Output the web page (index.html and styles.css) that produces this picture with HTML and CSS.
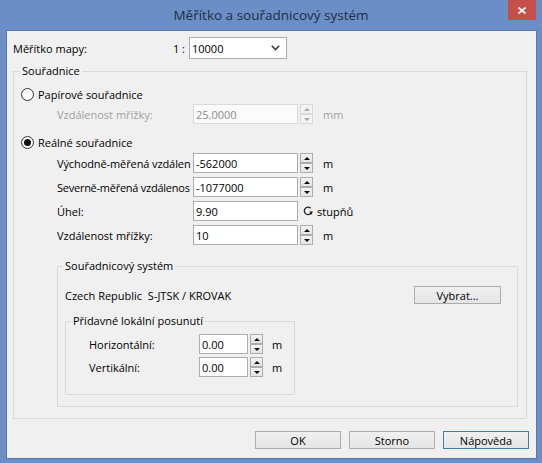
FILE: index.html
```html
<!DOCTYPE html>
<html lang="cs">
<head>
<meta charset="utf-8">
<title>Měřítko a souřadnicový systém</title>
<link rel="stylesheet" href="styles.css">
</head>
<body>
<div class="window">
  <div class="titlebar">
    <span class="title">Měřítko a souřadnicový systém</span>
    <span class="close"><svg width="8" height="7" viewBox="0 0 8 7"><path d="M0.5 0.5 L7.5 6.5 M7.5 0.5 L0.5 6.5" stroke="#fff" stroke-width="1.6" fill="none"/></svg></span>
  </div>
  <div class="client">
    <div class="scale-row">
      <span class="scale-label">Měřítko mapy:</span>
      <span class="scale-sep">1 :</span>
      <div class="combo"><span>10000</span><svg class="chev" width="9" height="6" viewBox="0 0 9 6"><path d="M0.8 0.8 L4.5 4.6 L8.2 0.8" stroke="#3a3a3a" stroke-width="1.5" fill="none"/></svg></div>
    </div>

    <fieldset class="group g1">
      <legend>Souřadnice</legend>
      <div class="radio-row first"><span class="radio"></span><span>Papírové souřadnice</span></div>
      <div class="field-row disabled">
        <span class="flabel">Vzdálenost mřížky:</span>
        <span class="input">25.0000</span>
        <span class="spin"><span class="up"></span><span class="down"></span></span>
        <span class="unit">mm</span>
      </div>
      <div class="radio-row second"><span class="radio checked"></span><span>Reálné souřadnice</span></div>
      <div class="field-row r-east">
        <span class="flabel tight">Východně-měřená vzdálen</span>
        <span class="input">-562000</span>
        <span class="spin"><span class="up"></span><span class="down"></span></span>
        <span class="unit">m</span>
      </div>
      <div class="field-row gap">
        <span class="flabel tighter">Severně-měřená vzdálenos</span>
        <span class="input">-1077000</span>
        <span class="spin"><span class="up"></span><span class="down"></span></span>
        <span class="unit">m</span>
      </div>
      <div class="field-row gap">
        <span class="flabel">Úhel:</span>
        <span class="input">9.90</span>
        <svg class="rotate" width="10" height="10" viewBox="0 0 10 10"><path d="M7.6 2.2 A3.7 3.7 0 1 0 8.3 6.6" stroke="#222" stroke-width="1.3" fill="none"/><path d="M6.2 5.6 L9.8 5.4 L8.6 8.8 Z" fill="#222"/></svg>
        <span class="unit-deg">stupňů</span>
      </div>
      <div class="field-row gap">
        <span class="flabel">Vzdálenost mřížky:</span>
        <span class="input">10</span>
        <span class="spin"><span class="up"></span><span class="down"></span></span>
        <span class="unit">m</span>
      </div>

      <fieldset class="group g2">
        <legend>Souřadnicový systém</legend>
        <div class="cs-row">
          <span>Czech Republic&nbsp; S-JTSK / KROVAK</span>
          <span class="btn vybrat">Vybrat...</span>
        </div>
        <fieldset class="group g3">
          <legend>Přídavné lokální posunutí</legend>
          <div class="off-row first">
            <span class="olabel">Horizontální:</span>
            <span class="input small">0.00</span>
            <span class="spin"><span class="up"></span><span class="down"></span></span>
            <span class="unit">m</span>
          </div>
          <div class="off-row second">
            <span class="olabel">Vertikální:</span>
            <span class="input small">0.00</span>
            <span class="spin"><span class="up"></span><span class="down"></span></span>
            <span class="unit">m</span>
          </div>
        </fieldset>
      </fieldset>
    </fieldset>

    <div class="buttons">
      <span class="btn">OK</span>
      <span class="btn">Storno</span>
      <span class="btn default">Nápověda</span>
    </div>
  </div>
</div>
</body>
</html>
```

FILE: styles.css
```css
* { box-sizing: border-box; }
html, body { margin: 0; padding: 0; }
body {
  width: 542px;
  height: 463px;
  overflow: hidden;
  background: #6b8ec6;
  font-family: "Open Sans", "Noto Sans", sans-serif;
  font-size: 11px;
  color: #000;
}
.window {
  display: flex;
  flex-direction: column;
  height: 463px;
}
.titlebar {
  height: 31px;
  flex: none;
  position: relative;
  display: flex;
  align-items: center;
  justify-content: center;
}
.title {
  font-size: 13.5px;
  color: #1e2f45;
  line-height: 16px;
  margin-top: -1px;
}
.close {
  position: absolute;
  top: 0;
  right: 6px;
  width: 28px;
  height: 20px;
  background: #c74f4b;
  display: flex;
  align-items: center;
  justify-content: center;
}
.client {
  flex: 1;
  margin: 0 6px 5px 7px;
  background: #f0f0f0;
  box-shadow: 0 0 0 1px #5878ad;
  display: flex;
  flex-direction: column;
}
.scale-row {
  display: flex;
  align-items: center;
  height: 22px;
  margin-top: 6px;
  padding-left: 6px;
  white-space: nowrap;
}
.scale-label { width: 156px; }
.scale-sep { width: 20px; text-align: right; padding-right: 4px; }
.combo {
  width: 98px;
  height: 22px;
  border: 1px solid #abadb3;
  background: #fff;
  display: flex;
  align-items: center;
  justify-content: space-between;
  padding: 0 6px 0 2px;
}

.group {
  margin: 0;
  padding: 0;
  border: 1px solid #dadada;
  min-width: 0;
}
.group > legend {
  padding: 0 2px;
  line-height: 14px;
  height: 14px;
  margin-left: 6px;
}
.g1 { margin: 5px 0 0 6px; width: 514px; height: 355px; flex: none; }
.g2 { margin: 14px 0 0 43px; width: 461px; height: 148px; }
.g2 > legend { margin-left: 5px; }
.g3 { margin: 10px 0 0 7px; width: 230px; height: 81px; }
.g3 > legend { margin-left: 5px; }

.radio-row {
  display: flex;
  align-items: center;
  gap: 4px;
  height: 20px;
  padding-left: 7px;
}
.radio-row.first { margin-top: 6px; }
.radio-row.second { margin-top: 8px; }
.radio {
  width: 13px;
  height: 13px;
  border: 1px solid #333;
  border-radius: 50%;
  background: #fff;
  display: flex;
  align-items: center;
  justify-content: center;
}
.radio.checked::after {
  content: "";
  width: 7px;
  height: 7px;
  border-radius: 50%;
  background: #111;
}

.field-row {
  display: flex;
  align-items: center;
  height: 20px;
  padding-left: 43px;
}
.field-row.r-east { margin-top: 1px; }
.field-row.gap { margin-top: 4px; }
.flabel {
  width: 136px;
  flex: none;
  white-space: nowrap;
  overflow: hidden;
}
.flabel.tight { letter-spacing: -0.1px; }
.flabel.tighter { letter-spacing: -0.25px; }
.input {
  width: 105px;
  height: 20px;
  flex: none;
  border: 1px solid #abadb3;
  background: #fff;
  padding-left: 2px;
  display: flex;
  align-items: center;
}
.input.small { width: 49px; }
.spin {
  margin-left: 2px;
  width: 13px;
  height: 20px;
  flex: none;
  display: flex;
  flex-direction: column;
}
.spin > span {
  flex: 1;
  border: 1px solid #acacac;
  background: linear-gradient(#f4f4f4, #e4e4e4);
  display: flex;
  align-items: center;
  justify-content: center;
}
.spin > .up::after {
  content: "";
  border-left: 3px solid transparent;
  border-right: 3px solid transparent;
  border-bottom: 3px solid #111;
}
.spin > .down::after {
  content: "";
  border-left: 3px solid transparent;
  border-right: 3px solid transparent;
  border-top: 3px solid #111;
}
.unit { margin-left: 10px; }
.rotate { margin-left: 5px; flex: none; }
.unit-deg { margin-left: 4px; }

.disabled { color: #a0a0a0; }
.disabled .input { border-color: #d9d9d9; background: #fbfbfb; color: #8d8d8d; }
.disabled .spin > span { border-color: #d9d9d9; background: #f4f4f4; }
.disabled .spin > .up::after { border-bottom-color: #a8a8a8; }
.disabled .spin > .down::after { border-top-color: #a8a8a8; }

.cs-row {
  display: flex;
  align-items: center;
  justify-content: space-between;
  height: 18px;
  margin-top: 13px;
  padding: 0 16px 0 7px;
}
.btn {
  height: 18px;
  border: 1px solid #acacac;
  background: linear-gradient(#f0f0f0, #e5e5e5);
  display: flex;
  align-items: center;
  justify-content: center;
  width: 86px;
}
.btn.vybrat { width: 87px; }
.btn.default { border-color: #3c7fb1; }

.off-row {
  display: flex;
  align-items: center;
  height: 20px;
  padding-left: 23px;
}
.off-row.first { margin-top: 6px; }
.off-row.second { margin-top: 3px; }
.olabel { width: 110px; }
.off-row .unit { margin-left: 9px; }

.buttons {
  display: flex;
  justify-content: flex-end;
  gap: 8px;
  margin-top: 12px;
  padding-right: 7px;
}
```
